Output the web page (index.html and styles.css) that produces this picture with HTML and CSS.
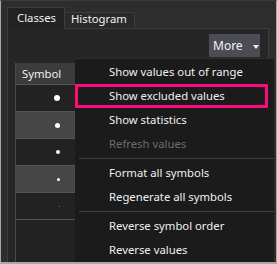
FILE: index.html
```html
<!DOCTYPE html>
<html lang="en">
  <head>
    <meta charset="UTF-8" />
    <meta name="viewport" content="width=device-width, initial-scale=1.0" />
    <title>Symbology</title>
    <link rel="stylesheet" href="styles.css">
  </head>
  <body>
    <div class="window">
      <div class="tabs">
        <div class="tab active">Classes</div>
        <div class="tab">Histogram</div>
      </div>
      <div class="panel">
        <div class="toolbar">
          <button class="more-btn">More <span class="arrow"></span></button>
        </div>
        <div class="symbol-table">
          <div class="header-cell">Symbol</div>
          <div class="row dark"><span class="dot" style="width:6px;height:6px"></span></div>
          <div class="row light"><span class="dot" style="width:5px;height:5px"></span></div>
          <div class="row dark"><span class="dot" style="width:4px;height:4px"></span></div>
          <div class="row light"><span class="dot" style="width:3px;height:3px"></span></div>
          <div class="row dark"><span class="dot faint" style="width:1px;height:1px"></span></div>
          <div class="row dark filler"></div>
        </div>
      </div>

      <div class="menu">
        <div class="menu-item">Show values out of range</div>
        <div class="menu-item marked">Show excluded values</div>
        <div class="menu-item">Show statistics</div>
        <div class="menu-item disabled">Refresh values</div>
        <div class="separator"></div>
        <div class="menu-item">Format all symbols</div>
        <div class="menu-item">Regenerate all symbols</div>
        <div class="separator"></div>
        <div class="menu-item">Reverse symbol order</div>
        <div class="menu-item">Reverse values</div>
      </div>
    </div>
  </body>
</html>
```

FILE: styles.css
```css
body {
  margin: 0;
  font-family: "Noto Sans", "Open Sans", sans-serif;
  font-size: 11.3px;
  color: #f0f0f0;
}

.window {
  position: relative;
  width: 277px;
  height: 264px;
  box-sizing: border-box;
  display: flex;
  flex-direction: column;
  padding: 6px 7px 0 6px;
  background-color: #2d2d2d;
  border: 1px solid #a8a8a8;
  border-top-color: #3a3a3a;
  border-bottom-width: 2px;
  overflow: hidden;
}

.tabs {
  display: flex;
  align-items: flex-end;
  height: 21px;
}

.tab {
  height: 15px;
  padding: 0 7px 0 6px;
  line-height: 12px;
  background-color: #2a2a2a;
  border: 1px solid #3d3d3d;
  border-bottom: none;
  border-left: none;
}

.tab.active {
  height: 21px;
  line-height: 20px;
  padding: 0 8px 0 9px;
  background-color: #232323;
  border-left: 1px solid #3d3d3d;
  position: relative;
  top: 1px;
}

.panel {
  flex: 1;
  background-color: #262626;
  border: 1px solid #3d3d3d;
  border-bottom: none;
  padding: 5px 7px 0 7px;
  display: flex;
  flex-direction: column;
}

.toolbar {
  display: flex;
  justify-content: flex-end;
  padding-right: 1px;
}

.more-btn {
  height: 23px;
  width: 51px;
  padding: 0 0 0 4px;
  text-align: left;
  font-family: inherit;
  font-size: 12px;
  color: #f4f4f4;
  background-color: #4b4c56;
  border: none;
}

.arrow {
  display: inline-block;
  margin-left: 7px;
  vertical-align: middle;
  border-left: 3px solid transparent;
  border-right: 3px solid transparent;
  border-top: 4px solid #f0f0f0;
}

.symbol-table {
  margin-top: 6px;
  width: 59px;
  flex: 1;
  display: flex;
  flex-direction: column;
  border-left: 1px solid #4a4a4a;
}

.header-cell {
  height: 21px;
  line-height: 21px;
  padding-left: 6px;
  background-color: #3c3c3c;
}

.row {
  height: 26px;
  border-top: 1px solid #555555;
  display: flex;
  align-items: center;
  justify-content: flex-end;
  padding-right: 15px;
}

.row.dark {
  background-color: #222222;
}

.row.light {
  background-color: #474747;
}

.row.filler {
  flex: 1;
}

.dot {
  border-radius: 50%;
  background-color: #ffffff;
}

.dot.faint {
  background-color: #8a8a8a;
}

.menu {
  position: absolute;
  left: 74px;
  top: 57px;
  width: 199px;
  bottom: 0;
  background-color: #1b1b1b;
  border-top: 1px solid #2f2f2f;
  padding-top: 1px;
}

.menu-item {
  position: relative;
  height: 24px;
  line-height: 24px;
  padding-left: 34px;
  white-space: nowrap;
}

.menu-item.disabled {
  color: #6c6c6c;
}

.menu-item.marked::after {
  content: "";
  position: absolute;
  left: 0;
  right: 6px;
  top: 0;
  bottom: 0;
  border: 3px solid #ff0a7c;
}

.separator {
  height: 1px;
  margin: 2px 0 2px 4px;
  background-color: #3e3e3e;
}
```
